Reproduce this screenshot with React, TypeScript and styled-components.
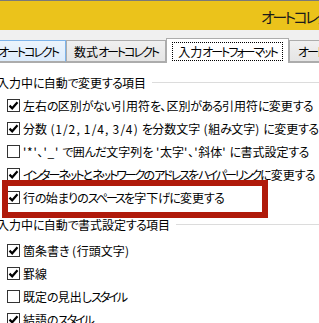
import React from "react";
import styled, { createGlobalStyle } from "styled-components";

const GlobalStyle = createGlobalStyle`
  html, body {
    margin: 0;
    padding: 0;
    overflow: hidden;
    background: #ffffff;
  }
  body {
    font-family: "Noto Sans CJK JP", "Noto Sans", sans-serif;
    font-feature-settings: "palt";
    color: #000;
  }
`;

type Script = "kanji" | "hira" | "kata" | "digit" | "latin" | "comma";

// the dialog font has narrow kana and a wide latin face; split into runs to match it
function classify(ch: string): Script {
  if (ch === "、") return "comma";
  if (/[\u3000-\u309f]/.test(ch)) return "hira";
  if (/[\u30a0-\u30ff]/.test(ch)) return "kata";
  if (/[0-9]/.test(ch)) return "digit";
  if (/[\x00-\x7f]/.test(ch)) return "latin";
  return "kanji";
}

const spacing: Record<Script, string> = {
  kanji: "0",
  hira: "-0.07em",
  kata: "-0.17em",
  digit: "0.1em",
  latin: "0.06em",
  comma: "0",
};

function Jp({ text }: { text: string }) {
  const runs: { kind: Script; s: string }[] = [];
  for (const ch of text) {
    const kind = classify(ch);
    const last = runs[runs.length - 1];
    if (last && last.kind === kind) last.s += ch;
    else runs.push({ kind, s: ch });
  }
  return (
    <>
      {runs.map((r, i) => (
        <Run key={i} $kind={r.kind}>
          {r.s}
        </Run>
      ))}
    </>
  );
}

type Item = { label: string; checked: boolean };

const changeItems: Item[] = [
  { label: "左右の区別がない引用符を、区別がある引用符に変更する", checked: true },
  { label: "分数 (1/2, 1/4, 3/4) を分数文字 (組み文字) に変更する", checked: true },
  { label: "'*'、'_' で囲んだ文字列を '太字'、'斜体' に書式設定する", checked: false },
  { label: "インターネットとネットワークのアドレスをハイパーリンクに変更する", checked: true },
  { label: "行の始まりのスペースを字下げに変更する", checked: true },
];

const formatItems: Item[] = [
  { label: "箇条書き (行頭文字)", checked: true },
  { label: "罫線", checked: true },
  { label: "既定の見出しスタイル", checked: false },
  { label: "結語のスタイル", checked: true },
];

function CheckRow({ item, marked }: { item: Item; marked?: boolean }) {
  return (
    <Row>
      <Box>
        {item.checked && (
          <svg width="11" height="11" viewBox="0 0 11 11">
            <path d="M1.5 5.6 L4.2 8.3 L9.5 2.3" fill="none" stroke="#000" strokeWidth="2.2" />
          </svg>
        )}
      </Box>
      <Label>
        <Jp text={item.label} />
      </Label>
      {marked && <Highlight />}
    </Row>
  );
}

export default function App() {
  return (
    <>
      <GlobalStyle />
      <Window>
        <TitleBar>
          <Title>
            <Jp text="オートコレクト オプション" />
          </Title>
        </TitleBar>
        <Body>
          <TabStrip>
            <Tab kind="hover" width={76}>
              <Jp text="オートコレクト" />
            </Tab>
            <Tab kind="normal" width={100}>
              <Jp text="数式オートコレクト" />
            </Tab>
            <Tab kind="active" width={123}>
              <Focus>
                <Jp text="入力オートフォーマット" />
              </Focus>
            </Tab>
            <Tab kind="normal" width={70} $start>
              <Jp text="オートコレクト" />
            </Tab>
          </TabStrip>
          <Panel>
            <Group>
              <Header>
                <HeaderText>
                  <Jp text="入力中に自動で変更する項目" />
                </HeaderText>
                <Rule />
              </Header>
              {changeItems.map((it, i) => (
                <CheckRow key={i} item={it} marked={i === 4} />
              ))}
            </Group>
            <Group $second>
              <Header $tall>
                <HeaderText>
                  <Jp text="入力中に自動で書式設定する項目" />
                </HeaderText>
                <Rule />
              </Header>
              {formatItems.map((it, i) => (
                <CheckRow key={i} item={it} />
              ))}
            </Group>
          </Panel>
        </Body>
      </Window>
    </>
  );
}

const Run = styled.span<{ $kind: Script }>`
  letter-spacing: ${(p) => spacing[p.$kind]};
`;

const Window = styled.div`
  width: 319px;
  height: 323px;
  overflow: hidden;
  display: flex;
  flex-direction: column;
  background: #ffffff;
`;

const TitleBar = styled.div`
  height: 29px;
  flex: none;
  border-top: 1px solid #7a7a7a;
  background: #ebc31b;
  display: flex;
  align-items: center;
  padding-left: 261px;
  overflow: hidden;
`;

const Title = styled.div`
  font-size: 15px;
  white-space: nowrap;
  color: #1a1a1a;
  line-height: 1;
  margin-top: 1px;
`;

const Body = styled.div`
  flex: 1;
  background: #f0f0f0;
  padding-top: 8px;
  display: flex;
  flex-direction: column;
`;

const TabStrip = styled.div`
  display: flex;
  align-items: flex-end;
  margin-left: -10px;
  height: 24px;
  position: relative;
  z-index: 1;
`;

const Tab = styled.div<{ kind: "hover" | "normal" | "active"; width: number; $start?: boolean }>`
  flex: none;
  box-sizing: border-box;
  width: ${(p) => p.width}px;
  height: ${(p) => (p.kind === "active" ? 25 : 22)}px;
  margin-bottom: ${(p) => (p.kind === "active" ? -1 : 0)}px;
  display: flex;
  align-items: center;
  justify-content: ${(p) => (p.$start ? "flex-start" : "center")};
  padding-left: ${(p) => (p.$start ? 8 : 0)}px;
  font-size: 12px;
  white-space: nowrap;
  overflow: hidden;
  border: 1px solid ${(p) => (p.kind === "hover" ? "#7eb4ea" : "#acacac")};
  border-bottom: ${(p) => (p.kind === "active" ? "none" : "1px solid #acacac")};
  background: ${(p) =>
    p.kind === "active"
      ? "#ffffff"
      : p.kind === "hover"
      ? "linear-gradient(#ecf4fc, #dcecfc)"
      : "linear-gradient(#f0f0f0, #e5e5e5)"};
`;

const Focus = styled.div`
  border: 1px dotted #000;
  padding: 0 5px;
  height: 17px;
  line-height: 17px;
  margin-top: 1px;
`;

const Panel = styled.div`
  flex: 1;
  background: #ffffff;
  border-top: 1px solid #acacac;
  padding-top: 7px;
  position: relative;
`;

const Group = styled.div<{ $second?: boolean }>`
  display: flex;
  flex-direction: column;
  margin-top: ${(p) => (p.$second ? 2 : 0)}px;
`;

const Header = styled.div<{ $tall?: boolean }>`
  box-sizing: border-box;
  height: ${(p) => (p.$tall ? 28 : 24)}px;
  padding-bottom: ${(p) => (p.$tall ? 2 : 0)}px;
  display: flex;
  align-items: center;
  gap: 6px;
  margin-left: -3px;
`;

const HeaderText = styled.span`
  font-size: 12px;
  white-space: nowrap;
`;

const Rule = styled.div`
  flex: 1;
  height: 1px;
  background: #dcdcdc;
`;

const Row = styled.div`
  position: relative;
  height: 23px;
  display: flex;
  align-items: center;
  padding-left: 7px;
  gap: 3px;
`;

const Box = styled.div`
  box-sizing: border-box;
  width: 13px;
  height: 13px;
  flex: none;
  border: 1px solid #333333;
  background: #ffffff;
  display: flex;
  align-items: center;
  justify-content: center;
`;

const Label = styled.span`
  font-size: 12px;
  white-space: nowrap;
`;

const Highlight = styled.div`
  position: absolute;
  left: 2px;
  top: -6px;
  width: 266px;
  height: 38px;
  box-sizing: border-box;
  border: 6px solid #b01a0b;
  pointer-events: none;
`;
